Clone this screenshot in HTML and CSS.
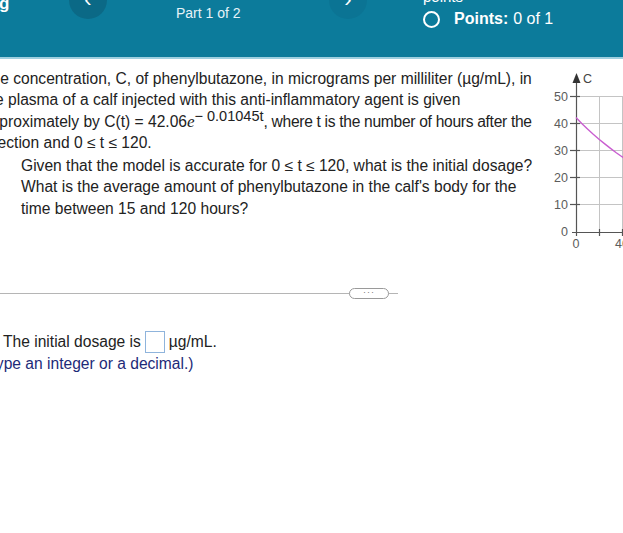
FILE: index.html
```html
<!DOCTYPE html>
<html lang="en">
<head>
    <meta charset="UTF-8">
    <title>Homework - Part 1 of 2</title>
    <link rel="stylesheet" href="styles.css">
</head>
<body>
    <header class="topbar">
        <div class="topbar-row">
            <div class="brand">g</div>
            <button class="nav-btn prev">&#8249;</button>
            <div class="part">Part 1 of 2</div>
            <button class="nav-btn next">&#8250;</button>
            <div class="score">
                <div class="score-label">points</div>
                <div class="score-value"><span class="ring"></span><b>Points:</b> 0 of 1</div>
            </div>
        </div>
    </header>

    <main class="page">
        <section class="question">
            <p class="stem">The concentration, C, of phenylbutazone, in micrograms per milliliter (&micro;g/mL), in<br>
                the plasma of a calf injected with this anti-inflammatory agent is given<br>
                approximately by C(t) = 42.06<i class="e">e</i><sup>&minus; 0.01045t</sup><span class="tight">, where t is the number of hours after the</span><br>
                injection and 0 &le; t &le; 120.</p>
            <p class="ask">Given that the model is accurate for 0 &le; t &le; 120, what is the initial dosage?<br>
                What is the average amount of phenylbutazone in the calf's body for the<br>
                time between 15 and 120 hours?</p>

            <div class="divider">
                <span class="more">&middot;&middot;&middot;</span>
            </div>

            <p class="answer">The initial dosage is <span class="answer-box"></span> &micro;g/mL.</p>
            <p class="hint">(Type an integer or a decimal.)</p>
        </section>

        <aside class="graph">
            <svg width="90" height="190" viewBox="0 0 90 190">
                <g stroke="#c4c4c4" stroke-width="1">
                    <line x1="31" y1="31.5" x2="90" y2="31.5"/>
                    <line x1="31" y1="58.5" x2="90" y2="58.5"/>
                    <line x1="31" y1="85.5" x2="90" y2="85.5"/>
                    <line x1="31" y1="112.5" x2="90" y2="112.5"/>
                    <line x1="31" y1="139.5" x2="90" y2="139.5"/>
                    <line x1="54.5" y1="31" x2="54.5" y2="167"/>
                    <line x1="77.5" y1="31" x2="77.5" y2="167"/>
                </g>
                <g stroke="#555" stroke-width="1.2">
                    <line x1="31.5" y1="14" x2="31.5" y2="171"/>
                    <line x1="27" y1="167.5" x2="90" y2="167.5"/>
                    <line x1="25" y1="31.5" x2="35" y2="31.5"/>
                    <line x1="25" y1="58.5" x2="35" y2="58.5"/>
                    <line x1="25" y1="85.5" x2="35" y2="85.5"/>
                    <line x1="25" y1="112.5" x2="35" y2="112.5"/>
                    <line x1="25" y1="139.5" x2="35" y2="139.5"/>
                    <line x1="54.5" y1="164" x2="54.5" y2="171"/>
                    <line x1="77.5" y1="164" x2="77.5" y2="171"/>
                </g>
                <path d="M31.5 8 L35.5 18 L27.5 18 Z" fill="#333"/>
                <polyline fill="none" stroke="#c95ed0" stroke-width="1.4"
                    points="31,52.6 36.75,58.4 42.5,63.9 48.25,69.2 54,74.2 59.75,78.9 65.5,83.4 71.25,87.7 77,91.7 82.75,95.5 88.5,99.1"/>
                <g class="axis-text" fill="#5c5c5c" font-size="12.5">
                    <text x="38" y="18" fill="#444">C</text>
                    <text x="23" y="36" text-anchor="end">50</text>
                    <text x="23" y="63" text-anchor="end">40</text>
                    <text x="23" y="90" text-anchor="end">30</text>
                    <text x="23" y="117" text-anchor="end">20</text>
                    <text x="23" y="144" text-anchor="end">10</text>
                    <text x="23" y="171" text-anchor="end">0</text>
                    <text x="31" y="183" text-anchor="middle">0</text>
                    <text x="77" y="183" text-anchor="middle">40</text>
                </g>
            </svg>
        </aside>
    </main>
</body>
</html>
```

FILE: styles.css
```css
html, body {
    margin: 0;
    padding: 0;
    overflow: hidden;
}
body {
    font-family: "Liberation Sans", Arial, sans-serif;
    background: #fff;
    color: #222;
    width: 623px;
    height: 533px;
}
.topbar {
    height: 57px;
    background: #0c7b9b;
    border-bottom: 2px solid #9fd0e0;
    overflow: hidden;
    color: #fff;
}
.topbar-row {
    display: flex;
    align-items: flex-start;
    margin-top: -19px;
    white-space: nowrap;
}
.topbar-row > * {
    flex: none;
}
.brand {
    font-weight: bold;
    font-size: 17px;
    margin-left: -1px;
    padding-top: 13px;
    width: 70px;
}
.nav-btn {
    width: 38px;
    height: 38px;
    border-radius: 50%;
    border: none;
    background: #0b6986;
    color: #fff;
    font-size: 22px;
    line-height: 38px;
    padding: 0;
    font-family: "Liberation Sans", Arial, sans-serif;
}
.nav-btn.prev {
    margin-right: 69px;
}
.nav-btn.next {
    background: #0b7494;
    margin-right: 56px;
}
.part {
    font-size: 14px;
    padding-top: 24px;
    width: 153px;
    color: #e6f3f8;
}
.score {
    padding-top: 7px;
}
.score-label {
    font-size: 15px;
    line-height: 18px;
}
.score-value {
    display: flex;
    align-items: center;
    font-size: 16px;
    margin-top: 4px;
}
.score-value b {
    margin-right: 5px;
}
.ring {
    width: 13px;
    height: 13px;
    border: 2px solid #fff;
    border-radius: 50%;
    margin-right: 14px;
}

.page {
    display: flex;
}
.question {
    width: 560px;
    flex: none;
    margin-left: -18px;
    padding-top: 9px;
    font-size: 15.6px;
    line-height: 21.3px;
}
.question p {
    margin: 0;
    white-space: nowrap;
}
.e {
    font-family: "Liberation Serif", "Times New Roman", serif;
    font-size: 17px;
}
sup {
    font-size: 14.5px;
    line-height: 0;
    vertical-align: 6px;
}
.tight {
    letter-spacing: -0.3px;
}
.question .ask {
    margin-top: 2px;
    padding-left: 39px;
}
.divider {
    margin-top: 74px;
    width: 416px;
    height: 1px;
    background: #b5b5b5;
    display: flex;
    justify-content: flex-end;
    align-items: center;
}
.more {
    margin-right: 9px;
    width: 38px;
    height: 9px;
    border: 1px solid #9a9a9a;
    border-radius: 6px;
    background: #fff;
    font-size: 9px;
    line-height: 7px;
    text-align: center;
    color: #777;
    letter-spacing: 1px;
}
.question .answer {
    margin-top: 37px;
    padding-left: 21px;
    display: flex;
    align-items: center;
}
.answer-box {
    display: inline-block;
    width: 18px;
    height: 20px;
    border: 1px solid #8fb4dc;
    margin: 0 4px 0 4px;
}
.hint {
    color: #1d2a78;
}
.graph {
    flex: none;
    margin-left: 3px;
    margin-top: 6px;
}
.axis-text text {
    font-family: "Liberation Sans", Arial, sans-serif;
}
```
